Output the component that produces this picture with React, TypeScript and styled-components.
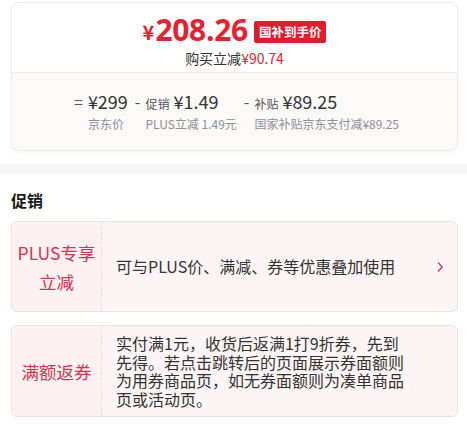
import React from "react"
import styled, { createGlobalStyle } from "styled-components"

const GlobalStyle = createGlobalStyle`
  body {
    margin: 0;
    background: #ffffff;
    font-family: "Noto Sans CJK SC", "Noto Sans", sans-serif;
    color: #333;
  }
`

const formula = [
  { op: "=", tag: "", value: "¥299", label: "京东价" },
  { op: "-", tag: "促销", value: "¥1.49", label: "PLUS立减 1.49元" },
  { op: "-", tag: "补贴", value: "¥89.25", label: "国家补贴京东支付减¥89.25" },
]

const promos = [
  {
    tag: ["PLUS专享", "立减"],
    text: "可与PLUS价、满减、券等优惠叠加使用",
    arrow: true,
  },
  {
    tag: ["满额返券"],
    text: "实付满1元，收货后返满1打9折券，先到先得。若点击跳转后的页面展示券面额则为用券商品页，如无券面额则为凑单商品页或活动页。",
    arrow: false,
  },
]

export default function App() {
  return (
    <>
      <GlobalStyle />
      <Page>
        <Inner>
          <PriceCard>
            <PriceTop>
              <PriceLine>
                <Yen>¥</Yen>
                <Amount>208.26</Amount>
                <Badge>国补到手价</Badge>
              </PriceLine>
              <SaveLine>
                购买立减<Red>¥90.74</Red>
              </SaveLine>
            </PriceTop>
            <Formula>
              {formula.map(f => (
                <Term key={f.label}>
                  <Op>{f.op}</Op>
                  <TermStack>
                    <TermValue>
                      {f.tag && <TermTag>{f.tag}</TermTag>}
                      {f.value}
                    </TermValue>
                    <TermLabel>{f.label}</TermLabel>
                  </TermStack>
                </Term>
              ))}
            </Formula>
          </PriceCard>
        </Inner>
        <Band />
        <Inner>
          <Title>促销</Title>
          <PromoList>
            {promos.map(p => (
              <PromoCard key={p.text}>
                <PromoTag>
                  {p.tag.map(t => (
                    <span key={t}>{t}</span>
                  ))}
                </PromoTag>
                <PromoBody>{p.text}</PromoBody>
                <ArrowSlot>
                  {p.arrow && (
                    <svg width="8" height="12" viewBox="0 0 8 12">
                      <path
                        d="M2 1.5 L6.2 6 L2 10.5"
                        fill="none"
                        stroke="#c2405a"
                        strokeWidth="1.4"
                      />
                    </svg>
                  )}
                </ArrowSlot>
              </PromoCard>
            ))}
          </PromoList>
        </Inner>
      </Page>
    </>
  )
}

const Page = styled.div`
  width: 467px;
  padding-top: 2px;
  padding-bottom: 18px;
`

const Inner = styled.div`
  padding: 0 9px 0 11px;
`

const PriceCard = styled.div`
  border: 1px solid #efeaec;
  border-radius: 8px;
  overflow: hidden;
  box-shadow: 0 2px 4px rgba(0, 0, 0, 0.04);
`

const PriceTop = styled.div`
  display: flex;
  flex-direction: column;
  align-items: center;
  padding: 10px 0 5px;
  background: #fff;
  border-bottom: 1px solid #f6eaea;
`

const PriceLine = styled.div`
  display: flex;
  align-items: center;
  height: 33px;
  line-height: 33px;
  color: #e3232f;
`

const Yen = styled.span`
  font-size: 20px;
  font-weight: 700;
  margin: 4px 1px 0 0;
`

const Amount = styled.span`
  font-family: "Open Sans", "Noto Sans", sans-serif;
  font-size: 30px;
  font-weight: 700;
  letter-spacing: -0.3px;
`

const Badge = styled.span`
  margin-left: 6px;
  margin-top: 4px;
  padding: 0 5px;
  height: 22px;
  line-height: 22px;
  border-radius: 2px;
  background: #e31b2d;
  color: #fff;
  font-size: 12.5px;
  font-weight: 700;
`

const SaveLine = styled.div`
  margin-top: 3px;
  font-size: 14px;
  line-height: 18px;
  color: #333;
`

const Red = styled.span`
  color: #e3232f;
`

const Formula = styled.div`
  display: flex;
  justify-content: center;
  gap: 7px;
  padding: 16px 0 18px 4px;
  background: #fcf9f9;
`

const Term = styled.div`
  display: flex;
  gap: 5px;
`

const Op = styled.span`
  font-size: 16px;
  line-height: 24px;
  height: 24px;
  color: #555;
`

const TermStack = styled.div`
  display: flex;
  flex-direction: column;
  gap: 3px;
`

const TermValue = styled.div`
  display: flex;
  align-items: baseline;
  gap: 4px;
  height: 24px;
  font-size: 18px;
  line-height: 24px;
  color: #333;
`

const TermTag = styled.span`
  font-size: 12px;
  line-height: 24px;
  color: #555;
`

const TermLabel = styled.div`
  font-size: 12px;
  line-height: 16px;
  height: 16px;
  color: #8f8f99;
  white-space: nowrap;
`

const Band = styled.div`
  height: 10px;
  margin-top: 13px;
  background: #f6f6f9;
`

const Title = styled.div`
  margin-top: 15px;
  font-size: 16px;
  font-weight: 700;
  line-height: 22px;
  color: #1a1a1a;
`

const PromoList = styled.div`
  display: flex;
  flex-direction: column;
  gap: 13px;
  margin-top: 10px;
`

const PromoCard = styled.div`
  display: flex;
  min-height: 89px;
  border: 1px solid #f1dfe0;
  border-radius: 6px;
  background: #fdf5f5;
  overflow: hidden;
`

const PromoTag = styled.div`
  flex: 0 0 89px;
  display: flex;
  flex-direction: column;
  align-items: center;
  justify-content: center;
  border-right: 1px dashed #efd6d8;
  background: #fdf1f2;
  color: #d7344b;
  font-size: 17.5px;
  line-height: 29px;
`

const PromoBody = styled.div`
  flex: 1;
  display: flex;
  align-items: center;
  padding: 8px 12px 8px 14px;
  font-size: 16px;
  line-height: 18.5px;
  color: #333;
`

const ArrowSlot = styled.div`
  flex: 0 0 34px;
  display: flex;
  align-items: center;
  justify-content: center;
`
